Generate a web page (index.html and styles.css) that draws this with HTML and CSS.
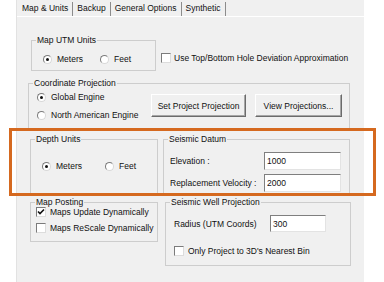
FILE: index.html
```html
<!DOCTYPE html>
<html lang="en">
<head>
  <meta charset="UTF-8" />
  <meta name="viewport" content="width=device-width, initial-scale=1.0"/>
  <title>Map &amp; Units</title>
  <link rel="stylesheet" href="styles.css">
</head>
<body>
  <div class="dialog">
    <div class="tabs">
      <div class="tab active">Map &amp; Units</div>
      <div class="tab">Backup</div>
      <div class="tab">General Options</div>
      <div class="tab">Synthetic</div>
    </div>

    <div class="row row-utm">
      <div class="group group-utm">
        <span class="group-title">Map UTM Units</span>
        <div class="options">
          <label class="opt opt-utm"><span class="radio checked"></span>Meters</label>
          <label class="opt"><span class="radio"></span>Feet</label>
        </div>
      </div>
      <label class="check-line check-use"><span class="checkbox"></span>Use Top/Bottom Hole Deviation Approximation</label>
    </div>

    <div class="row row-coord">
      <div class="group group-coord">
        <span class="group-title">Coordinate Projection</span>
        <div class="radio-col">
          <label class="opt"><span class="radio checked"></span>Global Engine</label>
          <label class="opt"><span class="radio"></span>North American Engine</label>
        </div>
        <button type="button" class="btn btn-set">Set Project Projection</button>
        <button type="button" class="btn btn-view">View Projections...</button>
      </div>
    </div>

    <div class="row row-depth">
      <div class="group group-depth">
        <span class="group-title">Depth Units</span>
        <div class="options">
          <label class="opt opt-depth"><span class="radio checked"></span>Meters</label>
          <label class="opt"><span class="radio"></span>Feet</label>
        </div>
      </div>
      <div class="group group-datum">
        <span class="group-title">Seismic Datum</span>
        <div class="field">
          <span class="field-label">Elevation :</span>
          <input class="input input-datum" type="text" value="1000" />
        </div>
        <div class="field">
          <span class="field-label">Replacement Velocity :</span>
          <input class="input input-datum" type="text" value="2000" />
        </div>
      </div>
    </div>

    <div class="row row-post">
      <div class="group group-post">
        <span class="group-title">Map Posting</span>
        <label class="check-line">
          <span class="checkbox"><svg width="8" height="8" viewBox="0 0 8 8"><path d="M1 3.5 L3 5.5 L7 1.5" fill="none" stroke="#111" stroke-width="1.6"/></svg></span>Maps Update Dynamically
        </label>
        <label class="check-line"><span class="checkbox"></span>Maps ReScale Dynamically</label>
      </div>
      <div class="group group-well">
        <span class="group-title">Seismic Well Projection</span>
        <div class="field field-well">
          <span class="field-label">Radius (UTM Coords)</span>
          <input class="input input-well" type="text" value="300" />
        </div>
        <label class="check-line check-bin"><span class="checkbox"></span>Only Project to 3D's Nearest Bin</label>
      </div>
    </div>
  </div>

  <div class="highlight"></div>
</body>
</html>
```

FILE: styles.css
```css
body {
  margin: 0;
  background: #fff;
  font-family: "Liberation Sans", Arial, sans-serif;
  font-size: 8.5px;
  color: #111;
  position: relative;
  height: 282px;
  overflow: hidden;
}
.dialog {
  margin-left: 16px;
  width: 347px;
  min-height: 282px;
  background: #f0f0f0;
  border-left: 1px solid #e2e2e2;
}
.tabs {
  display: flex;
  height: 16px;
  border-bottom: 1px solid #fff;
}
.tab {
  margin-top: 2px;
  height: 14px;
  line-height: 12px;
  padding: 0 4px;
  border-right: 1px solid #8c8c8c;
}
.tab.active {
  padding-left: 5px;
}
.row {
  display: flex;
  align-items: flex-start;
}
.row-utm {
  margin-top: 23px;
  padding-left: 14px;
}
.row-coord {
  margin-top: 12px;
  padding-left: 11px;
}
.row-depth {
  margin-top: 10px;
  padding-left: 13px;
  gap: 5px;
}
.row-post {
  margin-top: 8px;
  padding-left: 13px;
  gap: 7px;
}
.group {
  position: relative;
  box-sizing: border-box;
  border: 1px solid #cdcdcd;
}
.group-title {
  position: absolute;
  top: -6px;
  left: 4px;
  padding: 0 1px;
  line-height: 10px;
  background: #f0f0f0;
  white-space: nowrap;
}
.options {
  display: flex;
  align-items: center;
  height: 10px;
}
.opt {
  display: flex;
  align-items: center;
  gap: 5px;
  line-height: 10px;
  white-space: nowrap;
}
.radio {
  position: relative;
  flex: none;
  width: 9px;
  height: 9px;
  box-sizing: border-box;
  border-radius: 50%;
  border: 1px solid;
  border-color: #7b7b7b #d8d8d8 #d8d8d8 #7b7b7b;
  background: #fff;
}
.radio.checked::after {
  content: "";
  position: absolute;
  left: 2px;
  top: 2px;
  width: 3px;
  height: 3px;
  border-radius: 50%;
  background: #111;
}
.checkbox {
  display: flex;
  align-items: center;
  justify-content: center;
  flex: none;
  width: 10px;
  height: 10px;
  box-sizing: border-box;
  border: 1px solid;
  border-color: #7b7b7b #dcdcdc #dcdcdc #7b7b7b;
  background: #fff;
}
.check-line {
  display: flex;
  align-items: center;
  gap: 4px;
  height: 10px;
  line-height: 10px;
  white-space: nowrap;
}
.check-use {
  margin: 13px 0 0 5px;
  gap: 3px;
}

.group-utm {
  width: 125px;
  height: 31px;
  padding: 13px 0 0 11px;
}
.opt-utm {
  width: 57px;
}

.group-coord {
  display: flex;
  align-items: flex-start;
  width: 322px;
  height: 46px;
  padding: 8px 0 0 8px;
}
.radio-col {
  display: flex;
  flex-direction: column;
  gap: 8px;
  width: 114px;
}
.btn {
  margin-top: 2px;
  height: 23px;
  box-sizing: border-box;
  padding: 0;
  font: inherit;
  color: #111;
  background: #f0f0f0;
  border: 1px solid;
  border-color: #fff #6b6b6b #6b6b6b #fff;
  box-shadow: inset -1px -1px 0 #a6a6a6;
}
.btn-set {
  width: 95px;
}
.btn-view {
  width: 87px;
  margin-left: 9px;
}

.group-depth {
  width: 128px;
  height: 55px;
  padding: 21px 0 0 11px;
}
.opt-depth {
  width: 63px;
}
.group-datum {
  display: flex;
  flex-direction: column;
  gap: 4px;
  width: 187px;
  height: 55px;
  padding: 12px 0 0 6px;
}
.field {
  display: flex;
  align-items: center;
  height: 18px;
  white-space: nowrap;
}
.field-label {
  width: 94px;
}
.input {
  box-sizing: border-box;
  padding: 0 2px;
  font: inherit;
  color: #111;
  background: #fff;
  border: 1px solid;
  border-color: #7f7f7f #e3e3e3 #e3e3e3 #7f7f7f;
  outline: none;
}
.input-datum {
  width: 77px;
  height: 18px;
}

.group-post {
  display: flex;
  flex-direction: column;
  gap: 6px;
  width: 128px;
  height: 40px;
  padding: 4px 0 0 5px;
}
.group-well {
  width: 186px;
  height: 64px;
  padding: 12px 0 0 8px;
}
.field-well {
  height: 17px;
}
.field-well .field-label {
  width: 96px;
}
.input-well {
  width: 56px;
  height: 17px;
}
.check-bin {
  margin-top: 14px;
}

.highlight {
  position: absolute;
  left: 9px;
  top: 128px;
  width: 367px;
  height: 68px;
  box-sizing: border-box;
  border: 3px solid #d5691f;
}
```
